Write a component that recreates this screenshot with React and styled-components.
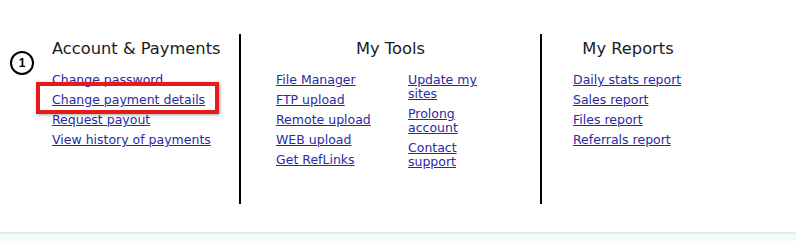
import styled, { createGlobalStyle } from "styled-components";

const GlobalStyle = createGlobalStyle`
  html, body {
    margin: 0;
    padding: 0;
    background: #ffffff;
  }
  body {
    font-family: "DejaVu Sans", Verdana, sans-serif;
  }
`;

const Page = styled.div`
  width: 796px;
  height: 241px;
  display: flex;
  flex-direction: column;
  overflow: hidden;
`;

const Menu = styled.div`
  display: flex;
  padding-top: 34px;
  flex: 1;
`;

const Column = styled.div`
  position: relative;
  box-sizing: border-box;
  width: ${(p) => p.width}px;
  height: 170px;
  padding-left: ${(p) => p.pad}px;
  padding-top: 5px;
  border-left: ${(p) => (p.divider ? "2px solid #000" : "none")};
`;

const Heading = styled.h3`
  margin: 0 0 14px;
  font-size: 16.3px;
  line-height: 20px;
  font-weight: normal;
  color: #1c1c1c;
  text-align: ${(p) => (p.center ? "center" : "left")};
  margin-left: ${(p) => (p.center ? `-${p.shift}px` : "0")};
`;

const LinkGrid = styled.div`
  display: flex;
`;

const LinkList = styled.ul`
  list-style: none;
  margin: 0;
  padding: 0;
  width: ${(p) => (p.width ? `${p.width}px` : "auto")};
`;

const Item = styled.li`
  font-size: 12.5px;
  line-height: 14px;
  margin-bottom: 6px;
`;

const Link = styled.a`
  color: #2a2aa5;
  text-decoration: underline;
  cursor: pointer;
`;

const StepBadge = styled.div`
  position: absolute;
  left: 10px;
  top: 17px;
  box-sizing: border-box;
  width: 24px;
  height: 24px;
  border: 2.5px solid #000;
  border-radius: 50%;
  display: flex;
  align-items: center;
  justify-content: center;
  font-size: 12px;
  font-weight: bold;
  color: #000;
  font-family: "Liberation Sans", Arial, sans-serif;
`;

const Highlight = styled.div`
  position: absolute;
  left: 36px;
  top: 48px;
  width: 175px;
  height: 24px;
  border: 4px solid #e31b1b;
  box-shadow: 1px 1px 3px rgba(0, 0, 0, 0.35);
  pointer-events: none;
`;

const Footer = styled.div`
  height: 7px;
  border-top: 2px solid #e9e9e9;
  background: #f0fdfd;
`;

const LinkItems = ({ items, width }) => (
  <LinkList width={width}>
    {items.map((t) => (
      <Item key={t}>
        <Link>{t}</Link>
      </Item>
    ))}
  </LinkList>
);

export default function App() {
  return (
    <>
      <GlobalStyle />
      <Page>
        <Menu>
          <Column width={239} pad={52}>
            <StepBadge>1</StepBadge>
            <Heading>Account &amp; Payments</Heading>
            <LinkItems
              items={[
                "Change password",
                "Change payment details",
                "Request payout",
                "View history of payments",
              ]}
            />
            <Highlight />
          </Column>
          <Column width={301} pad={35} divider>
            <Heading center shift={35}>My Tools</Heading>
            <LinkGrid>
              <LinkItems
                width={132}
                items={[
                  "File Manager",
                  "FTP upload",
                  "Remote upload",
                  "WEB upload",
                  "Get RefLinks",
                ]}
              />
              <LinkItems
                width={86}
                items={["Update my sites", "Prolong account", "Contact support"]}
              />
            </LinkGrid>
          </Column>
          <Column width={174} pad={31} divider>
            <Heading center shift={31}>My Reports</Heading>
            <LinkItems
              items={[
                "Daily stats report",
                "Sales report",
                "Files report",
                "Referrals report",
              ]}
            />
          </Column>
        </Menu>
        <Footer />
      </Page>
    </>
  );
}
